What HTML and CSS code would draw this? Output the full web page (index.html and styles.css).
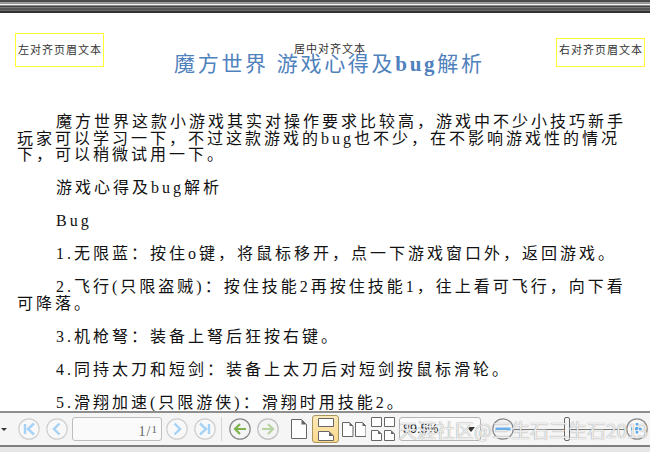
FILE: index.html
```html
<!DOCTYPE html>
<html lang="zh-CN">
<head>
<meta charset="utf-8">
<title>魔方世界 游戏心得及bug解析</title>
<link rel="stylesheet" href="styles.css">
</head>
<body>
<div class="viewer">
  <div class="stripes"></div>
  <main class="page">
    <header class="head">
      <div class="hbox hbox-left">左对齐页眉文本</div>
      <div class="hcenter">居中对齐文本</div>
      <div class="hbox hbox-right">右对齐页眉文本</div>
    </header>
    <h1 class="title">魔方世界 游戏心得及<b>bug</b>解析</h1>
    <p class="para">魔方世界这款小游戏其实对操作要求比较高，游戏中不少小技巧新手玩家可以学习一下，不过这款游戏的bug也不少，在不影响游戏性的情况下，可以稍微试用一下。</p>
    <p class="para">游戏心得及bug解析</p>
    <p class="para">Bug</p>
    <p class="para">1.无限蓝：按住o键，将鼠标移开，点一下游戏窗口外，返回游戏。</p>
    <p class="para">2.飞行(只限盗贼)：按住技能2再按住技能1，往上看可飞行，向下看可降落。</p>
    <p class="para">3.机枪弩：装备上弩后狂按右键。</p>
    <p class="para">4.同持太刀和短剑：装备上太刀后对短剑按鼠标滑轮。</p>
    <p class="para">5.滑翔加速(只限游侠)：滑翔时用技能2。</p>
  </main>
  <footer class="toolbar">
    <span class="caret"></span>
    <svg class="btn first" viewBox="0 0 22 22"><circle cx="11" cy="11" r="10.2" class="ring"/><path d="M7 6v10M16 5.5 10 11l6 5.5" class="blue"/></svg>
    <svg class="btn g6" viewBox="0 0 22 22"><circle cx="11" cy="11" r="10.2" class="ring"/><path d="M13.5 5.5 8 11l5.5 5.5" class="blue"/></svg>
    <div class="pagebox"><span class="cur">1</span>/<span class="tot">1</span></div>
    <svg class="btn g4" viewBox="0 0 22 22"><circle cx="11" cy="11" r="10.2" class="ring"/><path d="M8.5 5.5 14 11l-5.5 5.5" class="blue"/></svg>
    <svg class="btn g6" viewBox="0 0 22 22"><circle cx="11" cy="11" r="10.2" class="ring"/><path d="M15 6v10M6 5.5l6 5.5-6 5.5" class="blue"/></svg>
    <span class="sep"></span>
    <svg class="btn g-back" viewBox="0 0 22 22"><circle cx="11" cy="11" r="10.2" class="ring-dark"/><path d="M17 11H6M11 6l-5 5 5 5" class="green"/></svg>
    <svg class="btn g6 faded" viewBox="0 0 22 22"><circle cx="11" cy="11" r="10.2" class="ring-dark"/><path d="M5 11h11M11 6l5 5-5 5" class="green"/></svg>
    <svg class="pg-single" viewBox="0 0 16 20"><path d="M.5.5h10l5 5v14H.5z" class="sheet"/><path d="M10.5.5l5 5h-5z" class="fold"/></svg>
    <div class="active-view">
      <svg class="pg-cont" viewBox="0 0 16 23"><path d="M.5.5h15v8H.5z" class="sheet"/><path d="M.5 13.5h10.500l4.500 4.500v4.500H.5z" class="sheet"/><path d="M11 13.500l4.500 4.500H11z" class="fold"/></svg>
    </div>
    <svg class="pg-two" viewBox="0 0 24 15"><path d="M.5.5h7l3.500 3.500v10.500H.5z" class="sheet"/><path d="M7.500.5 11 4H7.500z" class="fold"/><path d="M13.500.5h7L24 4v10.500H13.500z" class="sheet"/><path d="M20.500.5 24 4h-3.500z" class="fold"/></svg>
    <svg class="pg-grid" viewBox="0 0 24 24"><path d="M.5.5h10v9H.5zM13.500.5h10v9h-10z" class="sheet"/><path d="M.5 13.500h6.500l3.500 3.500v6.500H.5zM13.500 13.500H20l3.500 3.500v6.500h-10z" class="sheet"/><path d="M7 13.500l3.500 3.500H7zM20 13.500l3.500 3.500H20z" class="fold"/></svg>
    <div class="zoombox"><span class="zoomval">89.5%</span><span class="zoomcaret"></span></div>
    <svg class="btn zoom-out" viewBox="0 0 22 22"><circle cx="11" cy="11" r="10.200" class="ring-dark"/><path d="M3.500 11h15" class="zoombar"/></svg>
    <div class="slider"><span class="thumb"></span></div>
    <svg class="btn" viewBox="0 0 22 22"><circle cx="11" cy="11" r="10.200" class="ring-dark dotted"/><path d="M11 5v12M5 11h12" class="plus"/></svg>
  </footer>
  <div class="floor"></div>
  <div class="watermark">天涯社区@三生石三生石2013</div>
</div>
</body>
</html>
```

FILE: styles.css
```css
* { box-sizing: border-box; }
html, body { margin: 0; height: 100%; }
body { background: #fff; overflow: hidden; }
.viewer {
  position: relative;
  width: 650px;
  height: 452px;
  display: flex;
  flex-direction: column;
  overflow: hidden;
  font-family: "Liberation Serif", "Noto Sans CJK SC", serif;
  color: #111;
}
.stripes {
  flex: none;
  height: 13px;
  background: linear-gradient(#4a4a4a 0 2px, #9a9a9a 2px 4px, #f2f2f2 4px 5px, #8a8a8a 5px 6px, #444 6px 7px, #777 7px 8px, #555 8px 10px, #6a6a6a 10px 11px, #333 11px 13px);
}
.page {
  flex: 1;
  min-height: 0;
  overflow: hidden;
  padding: 20px 5px 0 15px;
}
.head {
  display: flex;
  align-items: flex-end;
  justify-content: space-between;
  height: 34px;
  font-size: 11px;
  letter-spacing: 1px;
  color: #333;
}
.hbox {
  width: 89px;
  border: 1px solid #ffff33;
  padding: 0 0 0 2px;
  line-height: 16px;
  white-space: nowrap;
}
.hbox-left { height: 34px; padding-top: 8px; }
.hbox-right { height: 29px; padding-top: 3px; }
.hcenter { align-self: flex-start; margin: 8px 0 0 190px; line-height: 16px; flex: 1; }
.title {
  margin: -16px 0 0 159px;
  font-size: 21px;
  font-weight: 400;
  letter-spacing: 2.7px;
  line-height: 26px;
  color: #4f81bd;
  white-space: nowrap;
}
.title b { font-weight: 700; }
.para {
  margin: 0 15px 16.500px 2px;
  font-size: 16px;
  line-height: 16.500px;
  letter-spacing: 3px;
  text-indent: 39px;
}
.title + .para { margin-top: 37px; }
.toolbar {
  flex: none;
  height: 36px;
  display: flex;
  align-items: center;
  background: #f5f5f5;
  border-top: 2px solid #8e8e8e;
  border-bottom: 2px solid #7f7f7f;
}
.caret {
  width: 0; height: 0;
  margin-left: 1px;
  border: 3px solid transparent;
  border-top: 3px solid #333;
  border-left-width: 3.500px;
  border-right-width: 3.500px;
  transform: translateY(2px);
}
.btn { flex: none; width: 22px; height: 22px; fill: none; }
.first { margin-left: 11px; }
.g4 { margin-left: 4px; }
.g6 { margin-left: 6px; }
.g-back { margin-left: 7px; }
.ring { fill: #f8f8f8; stroke: #cfcfcf; stroke-width: 1.200; }
.ring-dark { fill: #f4f4f4; stroke: #8a8a8a; stroke-width: 1.200; }
.dotted { fill: #f8f8f8; }
.blue { fill: none; stroke: #a5d2f6; stroke-width: 2.400; }
.green { fill: none; stroke: #7db24c; stroke-width: 2.200; }
.faded { opacity: .5; }
.zoombar { stroke: #69b0ec; stroke-width: 3; }
.plus { stroke: #58a6e8; stroke-width: 2.500; stroke-dasharray: 2.500 1.500; }
.pagebox {
  flex: none;
  width: 90px;
  height: 24px;
  margin-left: 4px;
  padding-right: 3px;
  background: #fafafa;
  border: 1px solid #bdbdbd;
  border-radius: 3px;
  text-align: right;
  font-size: 14px;
  letter-spacing: 1px;
  line-height: 22px;
  color: #666;
}
.tot { font-size: 11px; vertical-align: 3px; }
.sep { flex: none; width: 1px; height: 24px; margin-left: 5px; background: #d5d5d5; }
.pg-single { flex: none; width: 16px; height: 20px; margin-left: 12px; }
.sheet { fill: #fff; stroke: #666; stroke-width: 1; }
.fold { fill: #666; }
.active-view {
  flex: none;
  width: 27px;
  height: 28px;
  margin-left: 5px;
  display: flex;
  align-items: center;
  justify-content: center;
  background: linear-gradient(#fbe9b8, #fbd98b);
  border: 1.500px solid #a8955f;
  border-radius: 3px;
}
.pg-cont { width: 16px; height: 23px; }
.pg-two { flex: none; width: 24px; height: 15px; margin-left: 3px; }
.pg-grid { flex: none; width: 24px; height: 24px; margin-left: 5px; }
.zoombox {
  flex: none;
  position: relative;
  width: 82px;
  height: 24px;
  margin-left: 4px;
  padding-left: 3px;
  background: #fafafa;
  border: 1px solid #b5b5b5;
  border-radius: 3px;
  font-family: "Liberation Sans", sans-serif;
  font-size: 12.500px;
  line-height: 22px;
  color: #222;
}
.zoomcaret {
  position: absolute;
  right: 5px;
  top: 9px;
  border: 4px solid transparent;
  border-top: 5px solid #333;
  border-bottom: 0;
}
.zoom-out { margin-left: 11px; }
.slider {
  flex: none;
  width: 112px;
  height: 24px;
  display: flex;
  align-items: center;
  justify-content: center;
  background: linear-gradient(#777, #777) center / 100% 1px no-repeat;
}
.thumb {
  width: 6px;
  height: 24px;
  margin-left: -7px;
  background: #f5f5f5;
  border: 1px solid #666;
  border-radius: 2px;
}
.floor { flex: none; height: 5px; background: #e6e6e6; }
.watermark {
  position: absolute;
  left: 398px;
  top: 418px;
  font-family: "Noto Sans CJK SC", sans-serif;
  font-size: 19px;
  line-height: 24px;
  color: rgba(255, 255, 255, .85);
  text-shadow: 0 0 1px #777;
  white-space: nowrap;
}
```
